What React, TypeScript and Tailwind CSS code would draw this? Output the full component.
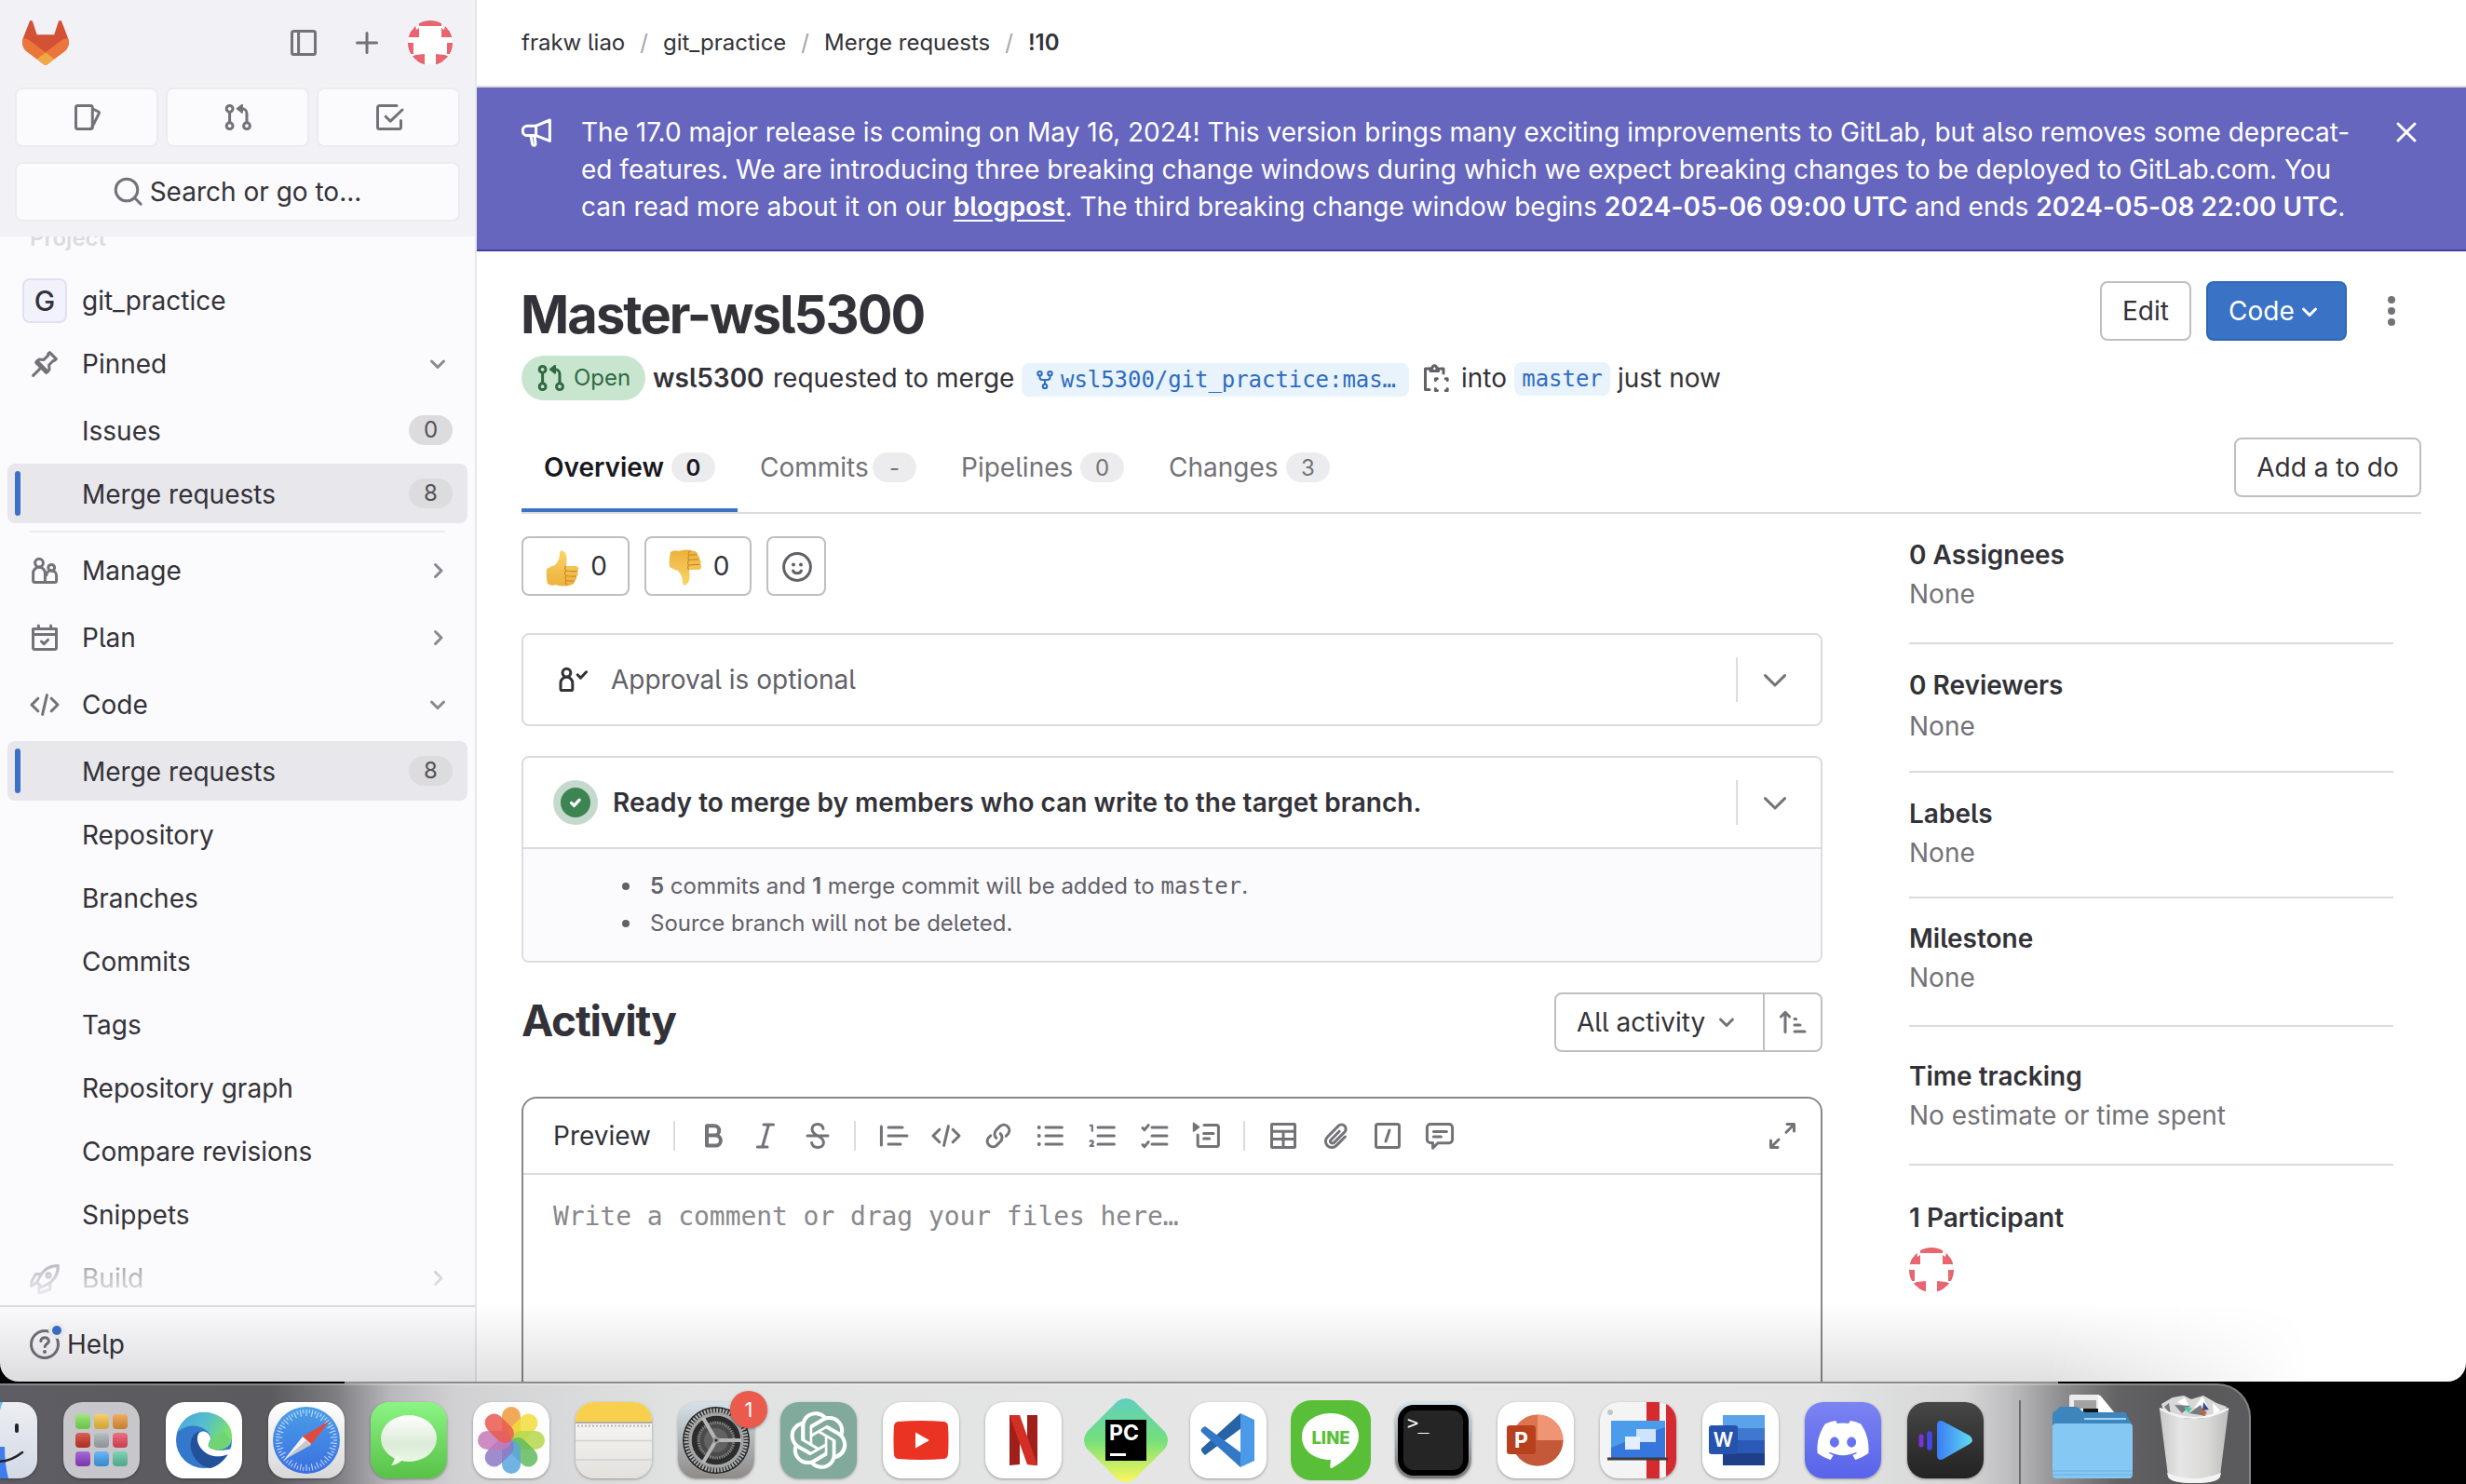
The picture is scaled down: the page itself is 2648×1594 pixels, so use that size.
import React from "react";
import { RiOpenaiFill } from "react-icons/ri";
import { FaDiscord } from "react-icons/fa";

type IconProps = { className?: string; children: React.ReactNode; w?: number };

function Icon({ className = "", children, w = 1.5 }: IconProps) {
  return (
    <svg
      viewBox="0 0 16 16"
      className={"size-8 shrink-0 " + className}
      fill="none"
      stroke="currentColor"
      strokeWidth={w}
      strokeLinecap="round"
      strokeLinejoin="round"
    >
      {children}
    </svg>
  );
}

/* ---------- icons ---------- */

const MergeIcon = ({ className }: { className?: string }) => (
  <Icon className={className}>
    <circle cx="3.3" cy="3.4" r="1.7" />
    <circle cx="3.3" cy="12.6" r="1.7" />
    <circle cx="12.5" cy="12.6" r="1.7" />
    <path d="M3.3 5.2v5.6M12.5 10.8V5.9a2.5 2.5 0 0 0-2.5-2.5H9" />
    <path d="M10 1.4v4L7.4 3.4z" fill="currentColor" strokeWidth="1" />
  </Icon>
);

const ForkIcon = ({ className }: { className?: string }) => (
  <Icon className={className}>
    <circle cx="4" cy="3" r="1.6" />
    <circle cx="12" cy="3" r="1.6" />
    <circle cx="8" cy="13" r="1.6" />
    <path d="M4 4.7V6c0 1.2.9 2 2 2h4c1.100 0 2-.8 2-2V4.700M8 8v3.300" />
  </Icon>
);

const ChevronDown = ({ className }: { className?: string }) => (
  <Icon className={className}>
    <path d="M4.750 6.500L8 9.750l3.250-3.250" />
  </Icon>
);

const ChevronRight = ({ className }: { className?: string }) => (
  <Icon className={className}>
    <path d="M6.750 4.750L10 8l-3.250 3.250" />
  </Icon>
);

const CodeIcon = ({ className }: { className?: string }) => (
  <Icon className={className}>
    <path d="M4.400 4.600L1 8l3.400 3.400M11.600 4.600L15 8l-3.400 3.400M9.200 2.800L6.800 13.200" />
  </Icon>
);

const PinIcon = () => (
  <Icon>
    <path d="M10.700 1.800l3.500 3.500-1 .9-.5-.1-2.400 2.400.2 2.500-1.700 1.700-5.500-5.500L5 5.500l2.500.2 2.400-2.400-.1-.6z" />
    <path d="M5.700 10.300L1.800 14.200M3.900 6.300l5.800 5.800" />
  </Icon>
);

const PeopleIcon = () => (
  <Icon>
    <circle cx="5" cy="3.800" r="2.200" />
    <circle cx="11.600" cy="6.400" r="1.700" />
    <path d="M1.800 13.200V9.300a3.200 3.200 0 0 1 6.400 0v4.900H2.800a1 1 0 0 1-1-1zM8.300 14.200h5a1 1 0 0 0 1-1v-2.300a2.700 2.700 0 0 0-5.400-.5" />
  </Icon>
);

const PlanIcon = () => (
  <Icon>
    <path d="M1.750 3.200h12.500v10.300a.7.700 0 0 1-.7.700H2.450a.7.700 0 0 1-.7-.7zM1.750 6.300h12.500M4.700 1.500v1.500M11.300 1.500v1.500M6.200 10l1.400 1.300 2.200-2.200" />
  </Icon>
);

const RocketIcon = () => (
  <Icon className="translate-y-px">
    <path d="M15.200.8c-4.600 0-7.800 2-9.700 5.700l-1.700 3.200 2.600 2.600 3.200-1.700c3.700-2 5.600-5.200 5.600-9.800z" />
    <path d="M6.200 5.300H3.100L.9 9.500l-.1 2.200 3-2M10.900 10.200v3.200l-4.300 1.700-1.800.1.300-3" />
    <circle cx="10" cy="6" r="1.100" />
  </Icon>
);

const Tanuki = () => (
  <svg viewBox="0 0 25 24" className="h-12 w-[50px]">
    <path
      d="m24.507 9.500-.034-.090L21.082.562a.896.896 0 0 0-1.694.091l-2.290 7.010H7.825L5.535.653a.898.898 0 0 0-1.694-.090L.451 9.411.416 9.500a6.297 6.297 0 0 0 2.090 7.278l.012.010.030.022 5.160 3.867 2.560 1.935 1.554 1.176a1.051 1.051 0 0 0 1.268 0l1.555-1.176 2.560-1.935 5.197-3.890.014-.010A6.297 6.297 0 0 0 24.507 9.500Z"
      fill="#d35134"
    />
    <path
      d="m24.507 9.500-.034-.090a11.440 11.440 0 0 0-4.560 2.051l-7.447 5.632 4.742 3.584 5.197-3.890.014-.010A6.297 6.297 0 0 0 24.507 9.500Z"
      fill="#eb763b"
    />
    <path
      d="m7.707 20.677 2.560 1.935 1.555 1.176a1.051 1.051 0 0 0 1.268 0l1.555-1.176 2.560-1.935-4.743-3.584-4.755 3.584Z"
      fill="#f0a842"
    />
    <path
      d="M5.010 11.461a11.430 11.430 0 0 0-4.560-2.050L.416 9.500a6.297 6.297 0 0 0 2.090 7.278l.012.010.030.022 5.160 3.867 4.745-3.584-7.444-5.632Z"
      fill="#eb763b"
    />
  </svg>
);

const Avatar = () => (
  <svg viewBox="0 0 48 48" className="size-12 overflow-hidden rounded-full bg-white">
    <g fill="#ea6570">
      <path d="M12 0h24v6H12zM0 24h6v12H0zM42 24h6v12h-6z" />
      <path d="M0 18h12V8l-3 2-1-5-3 5-5 3zM48 18H36V8l3 2 1-5 3 5 5 3z" />
      <path d="M18 36v12H6l4-5-6-4 4-2zM30 36v12h12l-4-5 6-4-4-2z" />
    </g>
    <circle cx="24" cy="24" r="23.500" fill="none" stroke="#000" strokeOpacity=".07" />
  </svg>
);

/* ---------- sidebar ---------- */

function NavBadge({ children }: { children: React.ReactNode }) {
  return (
    <span className="flex h-8 w-[47px] items-center justify-center rounded-full bg-[#dcdcde] text-2xl text-[#535158]">
      {children}
    </span>
  );
}

function SubItem({ label, badge, active, className = "mt-1" }: { label: string; badge?: string; active?: boolean; className?: string }) {
  return (
    <div
      className={
        "flex h-16 shrink-0 items-center rounded-lg pr-4 " + (active ? "bg-[#e8e7ec] " : "") + className
      }
    >
      <span className={"ml-2 h-12 w-1.5 rounded-full " + (active ? "bg-[#3a72c6]" : "")} />
      <span className="ml-[66px] flex-1 pt-[3px]">{label}</span>
      {badge && <NavBadge>{badge}</NavBadge>}
    </div>
  );
}

function Category({ icon, label, open, className }: { icon: React.ReactNode; label: string; open?: boolean; className: string }) {
  return (
    <div className={"flex h-16 shrink-0 items-center pl-6 pr-4 " + className}>
      <span className="text-[#737278]">{icon}</span>
      <span className="ml-6 flex-1 pt-0.5">{label}</span>
      <span className="text-[#89888d]">{open ? <ChevronDown /> : <ChevronRight />}</span>
    </div>
  );
}

function Sidebar() {
  const shortcut = "flex h-16 flex-1 items-center justify-center rounded-lg border-2 border-[#ececef] bg-[#fbfafd] pl-0.5";
  return (
    <aside className="flex w-[512px] shrink-0 flex-col border-r-2 border-[#e7e6eb] bg-[#fbfafd]">
      <div className="h-[254px] shrink-0 bg-[#f2f1f6] px-4 pt-[22px] text-[#737278]">
        <div className="flex h-12 items-center pl-2 pr-2">
          <Tanuki />
          <div className="ml-auto flex items-center">
            <Icon>
              <rect x="1.750" y="1.750" width="12.500" height="12.500" rx="1" />
              <path d="M5.300 2v12" />
            </Icon>
            <Icon className="ml-9">
              <path d="M8 2.750v10.500M2.750 8h10.500" />
            </Icon>
            <span className="ml-7">
              <Avatar />
            </span>
          </div>
        </div>
        <div className="mt-6 flex gap-2">
          <div className={shortcut}>
            <Icon>
              <rect x="1.750" y="1.750" width="8.900" height="12.500" rx="1" />
              <path d="M10.900 3.600l3 1.400q.5.300.3.800L10.300 13.600" />
            </Icon>
          </div>
          <div className={shortcut}>
            <MergeIcon />
          </div>
          <div className={shortcut}>
            <Icon>
              <path d="M12 1.750H2.750a1 1 0 0 0-1 1v10.500a1 1 0 0 0 1 1h10.500a1 1 0 0 0 1-1V9.800M6.100 7.600l2.500 2.500L15 4" />
            </Icon>
          </div>
        </div>
        <div className="mt-4 flex h-16 items-center justify-center rounded-lg border-2 border-[#ececef] bg-[#fbfafd]">
          <Icon>
            <circle cx="7" cy="7" r="5.900" />
            <path d="M11.400 11.400l3.200 3.200" />
          </Icon>
          <span className="ml-[7px] pt-0.5 text-[#333238]">Search or go to...</span>
        </div>
      </div>

      <nav className="relative flex h-[1148px] shrink-0 flex-col overflow-hidden px-2 text-[#333238]">
        <div className="-mt-4 h-[37px] shrink-0 pl-6 text-2xl leading-[36px] font-semibold text-[#dcdbdf]">Project</div>
        <div className="mt-4 flex h-16 shrink-0 items-center pl-4">
          <span className="flex size-12 items-center justify-center rounded-lg border-2 border-[#e2e0f0] bg-[#f2f2fd] text-[30px] font-medium">
            G
          </span>
          <span className="ml-4 pt-0.5">git_practice</span>
        </div>
        <Category icon={<PinIcon />} label="Pinned" open className="mt-1" />
        <SubItem label="Issues" badge="0" className="mt-[7px]" />
        <SubItem label="Merge requests" badge="8" active />
        <div className="mx-6 mt-2 h-0.5 shrink-0 bg-[#ececef]" />
        <Category icon={<PeopleIcon />} label="Manage" className="mt-[9px]" />
        <Category icon={<PlanIcon />} label="Plan" className="mt-2" />
        <Category icon={<CodeIcon />} label="Code" open className="mt-2" />
        <SubItem label="Merge requests" badge="8" active className="mt-[7px]" />
        {["Repository", "Branches", "Commits", "Tags", "Repository graph", "Compare revisions", "Snippets"].map((l) => (
          <SubItem key={l} label={l} />
        ))}
        <Category icon={<RocketIcon />} label="Build" className="mt-[5px]" />
        <div className="absolute inset-x-0 bottom-0 h-[72px] bg-gradient-to-b from-[#fbfafd]/25 to-[#fbfafd]" />
      </nav>

      <div className="flex flex-1 items-center border-t-2 border-[#dcdcde] pl-8 text-[#333238]">
        <span className="relative text-[#737278]">
          <Icon>
            <circle cx="8" cy="8" r="7.250" />
            <path d="M5.900 6.200c.2-1.200 1-1.800 2.200-1.800 1.200 0 2.100.8 2.100 1.800 0 1.500-2.100 1.600-2.100 3.100" />
            <circle cx="8" cy="12" r=".5" fill="currentColor" strokeWidth="1" />
          </Icon>
          <span className="absolute -top-1 left-6 size-2.5 rounded-full bg-[#3a72c6] ring-4 ring-[#f4f3f7]" />
        </span>
        <span className="ml-2 pt-0.5">Help</span>
      </div>
    </aside>
  );
}

/* ---------- main ---------- */

function Banner() {
  return (
    <div className="flex h-[176px] shrink-0 border-b-2 border-[#41419f] bg-[#6666be] pl-12 pt-7 text-white">
      <Icon className="mt-1">
        <path d="M15.200 1.500v11.200L7.800 9.800V4.600zM7.800 4.600H3.200a2.600 2.600 0 0 0 0 5.200h4.600M5 10l.8 4.300q.2.900 1 .8.900-.2.700-1.100L7 10" />
      </Icon>
      <div className="ml-8 w-[1949px] leading-[40px] whitespace-nowrap">
        <div>
          The 17.0 major release is coming on May 16, 2024! This version brings many exciting improvements to GitLab, but
          also removes some deprecat-
        </div>
        <div>
          ed features. We are introducing three breaking change windows during which we expect breaking changes to be
          deployed to GitLab.com. You
        </div>
        <div className="tracking-[0.01px]">
          can read more about it on our <b className="font-semibold underline underline-offset-4">blogpost</b>. The third
          breaking change window begins <b className="font-semibold">2024-05-06 09:00 UTC</b> and ends{" "}
          <b className="font-semibold">2024-05-08 22:00 UTC</b>.
        </div>
      </div>
      <Icon className="-ml-[5px] mt-1">
        <path d="M3.500 3.500l9 9M12.500 3.500l-9 9" />
      </Icon>
    </div>
  );
}

function Tab({ label, count, active, className }: { label: string; count: string; active?: boolean; className: string }) {
  return (
    <div
      className={
        "flex h-full shrink-0 items-center justify-between pl-6 " +
        (active ? "border-b-4 border-[#3a72c6] pt-1 font-semibold text-[#18171d] " : "text-[#737278] ") +
        className
      }
    >
      <span className="pt-0.5">{label}</span>
      <span className="flex h-8 w-[47px] items-center justify-center rounded-full bg-[#ececef] pt-px text-2xl">{count}</span>
    </div>
  );
}

const Hand = ({ down }: { down?: boolean }) => (
  <svg viewBox="0 0 36 40" className={"h-10 w-9 " + (down ? "-scale-y-100" : "translate-y-0.5")}>
    <defs>
      <linearGradient id="skin" x1="0" y1="0" x2="0" y2="1">
        <stop offset="0" stopColor="#f9d568" />
        <stop offset="1" stopColor="#eeb03c" />
      </linearGradient>
    </defs>
    <path
      d="M1 20q5-3 9-4 5-5 5-13 1-4 4-2 5 3 3 16l11 0q4 2 1 6 2 3-1 5 1 3-2 5 0 3-3 4-10 3-17 0-5 2-9-1-2-8-1-16z"
      fill="url(#skin)"
    />
    <path
      d="M22 17q-3 2 0 5 5 1 12 .5M22 22q-3 2 0 5.500 5 1 11 .5M22 27.500q-2 2 0 5 4 1 9 .5M22 32.500q-2 2 1 5"
      fill="none"
      stroke="#c98a2a"
      strokeWidth="1.200"
    />
  </svg>
);

function CardChevron() {
  return (
    <div className="ml-auto flex h-12 w-[91px] items-center border-l-2 border-[#dcdcde] pl-6 text-[#737278]">
      <Icon>
        <path d="M2.750 5.800L8 11l5.250-5.200" />
      </Icon>
    </div>
  );
}

const Rule = ({ className }: { className: string }) => <div className={"h-8 w-0.5 bg-[#dcdcde] " + className} />;

function Toolbar() {
  return (
    <div className="flex h-[82px] items-center border-b-2 border-[#dcdcde] pl-8 text-[#737278]">
      <span className="w-[129px] pt-0.5 text-[#333238]">Preview</span>
      <Rule className="" />
      <div className="ml-[25px] flex gap-6">
        <Icon w={2}>
          <path d="M4.500 2.600h4a2.600 2.600 0 0 1 0 5.200h-4zM4.500 7.800h4.700a2.700 2.700 0 0 1 0 5.500H4.500z" />
        </Icon>
        <Icon>
          <path d="M7 2h5.300M3.700 14H9M9.700 2L6.300 14" />
        </Icon>
        <Icon>
          <path d="M2.500 8h11M11 4.200C10.700 2.600 9.600 1.750 8 1.750 6.300 1.750 5 2.800 5 4.400 5 6.500 6.800 7.300 8 8s3.200 1.500 3.200 3.600c0 1.600-1.400 2.650-3.100 2.650-1.800 0-3-.9-3.300-2.500" />
        </Icon>
      </div>
      <Rule className="ml-[23px]" />
      <div className="ml-[25px] flex gap-6">
        <Icon>
          <path d="M1.200 3v10M5 3.500h7.500M5 8h10M5 12.500h6.500" />
        </Icon>
        <CodeIcon />
        <Icon>
          <path d="M6.900 9.200a3 3 0 0 1-.1-4.200l2.300-2.300a3 3 0 0 1 4.200 4.200l-1.200 1.200M9.100 6.800a3 3 0 0 1 .1 4.200l-2.300 2.300a3 3 0 0 1-4.200-4.200l1.200-1.200" />
        </Icon>
        <Icon>
          <path d="M5.500 3.500h8.700M5.500 8h8.700M5.500 12.500h8.700" />
          <path d="M1.800 3.500h.1M1.800 8h.1M1.800 12.500h.1" strokeWidth="1.900" />
        </Icon>
        <Icon>
          <path d="M5.500 3.500h8.700M5.500 8h8.700M5.500 12.500h8.700" />
          <path d="M1.400 2.400h1v3M1.300 10.800q1.700-.5 1.600.7-.1.800-1.600 2h1.700" strokeWidth="1.100" />
        </Icon>
        <Icon>
          <path d="M6.500 3.500h8M6.500 8h8M6.500 12.500h8M1.500 3.800l1 1L4.600 2.300M1.500 12.800l1 1 2.100-2.500" />
        </Icon>
        <Icon>
          <path d="M.8 1.200L3.800 3.300.8 5.500z" fill="currentColor" strokeWidth=".8" />
          <path d="M6.500 2.300h6.700a1 1 0 0 1 1 1v9.400a1 1 0 0 1-1 1H4.100a1 1 0 0 1-1-1V7.500M6.300 6.700h5.200M6.300 9.500h3" />
        </Icon>
      </div>
      <Rule className="ml-[23px]" />
      <div className="ml-[25px] flex gap-6">
        <Icon>
          <rect x="1.750" y="1.750" width="12.500" height="12.500" rx=".3" />
          <path d="M1.750 5.600h12.500M1.750 9.800h12.500M8 5.600v8.600" />
        </Icon>
        <Icon>
          <path d="M13.200 8.500l-4.800 4.800a3.300 3.300 0 0 1-4.700-4.700l5.900-5.900a2.300 2.300 0 0 1 3.300 3.300l-5.700 5.700a1.100 1.100 0 0 1-1.600-1.600l4.500-4.500" />
        </Icon>
        <Icon>
          <rect x="1.750" y="1.750" width="12.500" height="12.500" rx="1" />
          <path d="M9 5L7 11" />
        </Icon>
        <Icon>
          <path d="M3 1.750h10a1.800 1.800 0 0 1 1.800 1.800v6.500a1.800 1.800 0 0 1-1.800 1.800H7L4.300 14.600v-2.800H3a1.800 1.800 0 0 1-1.800-1.800V3.550A1.800 1.800 0 0 1 3 1.750zM4.700 5.800h7M4.700 8.500h4" />
        </Icon>
      </div>
      <Icon className="ml-auto mr-[25px]">
        <path d="M10 6.100l4-4M10.500 1.750h3.750V5.500M6 10l-4 4M1.750 10.500v3.750H5.500" />
      </Icon>
    </div>
  );
}

function MetaBlock({ title, value, className, gap }: { title: string; value: string; className: string; gap: string }) {
  return (
    <div className={"border-b-2 border-[#dcdcde] leading-[40px] " + className}>
      <div className="font-semibold text-[#333238]">{title}</div>
      <div className={"text-[#737278] " + gap}>{value}</div>
    </div>
  );
}

function Main() {
  const btn = "flex h-16 items-center justify-center rounded-lg border-2 border-[#bfbfc3] bg-white pt-0.5 text-[#333238]";
  const chip = "rounded-lg bg-[#e9f3fc] font-['DejaVu_Sans_Mono',monospace] text-2xl tracking-[-0.05px] text-[#2f6cc0]";
  const sep = <span className="mx-4 text-[#a4a3a8]">/</span>;
  return (
    <main className="flex min-w-0 flex-1 flex-col bg-white text-[#333238]">
      <div className="flex h-[94px] shrink-0 items-center border-b-2 border-[#dcdcde] pl-12 text-2xl">
        frakw liao{sep}git_practice{sep}Merge requests{sep}
        <span className="font-semibold">!10</span>
      </div>
      <Banner />
      <div className="flex min-h-0 flex-1 flex-col pl-12 pt-8">
        <div className="flex h-16 shrink-0 items-center">
          <h1 className="-ml-px pt-2 text-[56px] leading-none font-[650] tracking-[-1.9px]">Master-wsl5300</h1>
          <div className={"ml-auto w-[98px] " + btn}>Edit</div>
          <div className="ml-4 flex h-16 w-[151px] items-center rounded-lg border-2 border-[#2f68b4] bg-[#3a72c6] pl-[22px] pt-0.5 text-white">
            Code
            <ChevronDown />
          </div>
          <div className="mr-[76px] ml-11 flex flex-col gap-1">
            <i className="size-2 rounded-full bg-[#737278]" />
            <i className="size-2 rounded-full bg-[#737278]" />
            <i className="size-2 rounded-full bg-[#737278]" />
          </div>
        </div>

        <div className="mt-4 flex h-12 shrink-0 items-center whitespace-nowrap">
          <span className="flex h-12 w-[133px] shrink-0 items-center rounded-full bg-[#c8e5cf] pl-4 text-2xl text-[#2f6a40]">
            <MergeIcon />
            <span className="ml-2">Open</span>
          </span>
          <b className="ml-2 w-[129px] shrink-0 pt-px font-semibold">wsl5300</b>
          <span className="w-[267px] shrink-0 pt-px">requested to merge</span>
          <span className={"mt-1 flex h-9 w-[416px] shrink-0 items-center pl-3.5 " + chip}>
            <ForkIcon className="mr-1.5 !size-[22px]" />
            wsl5300/git_practice:mas…
          </span>
          <Icon className="ml-3 text-[#626168]">
            <path d="M5 3H2.750v11.250H5M11 3h1.500v2.500" />
            <path d="M5.500 4.200V2.900h.9a1.250 1.500 0 0 1 2.500 0h.9v1.300z" />
            <path d="M8.200 9.200V8.400h1M13.600 8.400h1v.8M14.600 13.800v.9h-1M9.200 14.700h-1v-.9" />
          </Icon>
          <span className="ml-3 w-[57px] shrink-0 pt-px">into</span>
          <span className={"mt-0.5 flex h-9 w-[103px] shrink-0 items-center justify-center " + chip}>master</span>
          <span className="ml-2 pt-px">just now</span>
        </div>

        <div className="mr-12 mt-6 flex h-[98px] shrink-0 items-center border-b-2 border-[#dcdcde]">
          <Tab label="Overview" count="0" active className="w-[232px] pr-6" />
          <Tab label="Commits" count="-" className="w-[216px] pr-6" />
          <Tab label="Pipelines" count="0" className="w-[223px] pr-6" />
          <Tab label="Changes" count="3" className="w-[221px] pr-6" />
          <div className={"ml-auto w-[201px] " + btn}>Add a to do</div>
        </div>

        <div className="flex min-h-0 flex-1">
          <section className="flex w-[1397px] shrink-0 flex-col">
            <div className="mt-6 flex h-16 shrink-0">
              <div className={"w-[116px] gap-3 pl-0.5 " + btn}>
                <Hand />0
              </div>
              <div className={"ml-4 w-[115px] gap-3 pl-0.5 " + btn}>
                <Hand down />0
              </div>
              <div className={"ml-4 w-16 pl-px " + btn}>
                <Icon className="text-[#626168]">
                  <circle cx="8" cy="8" r="7.200" />
                  <path d="M5.800 10a2.300 2 0 0 0 4.400 0" />
                  <circle cx="6" cy="6.800" r=".5" fill="currentColor" strokeWidth="1" />
                  <circle cx="10" cy="6.800" r=".5" fill="currentColor" strokeWidth="1" />
                </Icon>
              </div>
            </div>

            <div className="mt-10 flex h-[100px] shrink-0 items-center rounded-lg border-2 border-[#dcdcde] pl-[37px] text-[#626168]">
              <Icon className="text-[#333238]">
                <circle cx="4.700" cy="4.300" r="2.200" />
                <path d="M1.500 12.500V9.800a3.200 3.200 0 0 1 6.400 0v3.200a.8.800 0 0 1-.8.800H2.300a.8.800 0 0 1-.8-.8zM10.600 5.400l1.600 1.700L15.300 3.900" />
              </Icon>
              <span className="ml-[25px] pt-0.5">Approval is optional</span>
              <CardChevron />
            </div>

            <div className="mt-8 h-[222px] shrink-0 overflow-hidden rounded-lg border-2 border-[#dcdcde]">
              <div className="flex h-[98px] items-center border-b-2 border-[#dcdcde] pl-8">
                <span className="flex size-12 items-center justify-center rounded-full bg-[#c5dacc]">
                  <span className="flex size-8 items-center justify-center rounded-full bg-[#3c8451] text-white">
                    <Icon w={2.200} className="!size-6">
                      <path d="M5 8.300l2 2 3.800-4.200" />
                    </Icon>
                  </span>
                </span>
                <b className="ml-4 pt-0.5 font-semibold tracking-[0.02px]">
                  Ready to merge by members who can write to the target branch.
                </b>
                <CardChevron />
              </div>
              <ul className="h-[120px] list-none bg-[#fbfafd] pt-5 text-2xl leading-[40px] text-[#626168]">
                <li className="flex items-center pl-[106px]">
                  <i className="mr-[22px] size-2 rounded-full bg-[#626168]" />
                  <span>
                    <b className="font-semibold">5</b> commits and <b className="font-semibold">1</b> merge commit will be
                    added to <span className="font-['DejaVu_Sans_Mono',monospace]">master</span>.
                  </span>
                </li>
                <li className="flex items-center pl-[106px]">
                  <i className="mr-[22px] size-2 rounded-full bg-[#626168]" />
                  Source branch will not be deleted.
                </li>
              </ul>
            </div>

            <div className="mt-8 flex h-16 shrink-0 items-center">
              <h2 className="pb-1 text-[46px] leading-none font-[650] tracking-[-1.2px]">Activity</h2>
              <div className="ml-auto flex h-16 w-[288px] rounded-lg border-2 border-[#bfbfc3]">
                <div className="flex w-[224px] items-center border-r-2 border-[#bfbfc3] pl-[22px]">
                  <span className="w-[145px] pt-0.5">All activity</span>
                  <ChevronDown className="text-[#737278]" />
                </div>
                <div className="flex flex-1 items-center justify-center text-[#737278]">
                  <Icon>
                    <path d="M4 13.200V2.800M1.700 5L4 2.700 6.300 5M9 6.200h.8M9 9.500h3M9 13h5.500" />
                  </Icon>
                </div>
              </div>
            </div>

            <div className="mt-12 h-[400px] shrink-0 rounded-t-2xl border-2 border-[#89888d]">
              <Toolbar />
              <div className="pt-[25px] pl-8 font-['DejaVu_Sans_Mono',monospace] leading-[40px] tracking-[-0.07px] text-[#89888d]">
                Write a comment or drag your files here…
              </div>
            </div>
          </section>

          <section className="ml-[93px] flex w-[520px] flex-col pt-6">
            <MetaBlock title="0 Assignees" value="None" gap="mt-0.5" className="pb-8" />
            <MetaBlock title="0 Reviewers" value="None" gap="mt-1" className="mt-6 pb-7" />
            <MetaBlock title="Labels" value="None" gap="mt-0.5" className="mt-6 pb-[27px]" />
            <MetaBlock title="Milestone" value="None" gap="mt-0.5" className="mt-[23px] pb-[31px]" />
            <MetaBlock title="Time tracking" value="No estimate or time spent" gap="mt-0.5" className="mt-[33px] pb-8" />
            <div className="mt-9 mb-3 leading-[40px] font-semibold">1 Participant</div>
            <Avatar />
          </section>
        </div>
      </div>
    </main>
  );
}

/* ---------- dock ---------- */

function Tile({ className = "", children }: { className?: string; children?: React.ReactNode }) {
  return (
    <div
      className={
        "relative flex size-[82px] shrink-0 items-center justify-center overflow-hidden rounded-[20px] shadow-[0_1px_3px_rgba(0,0,0,0.35)] " +
        className
      }
    >
      {children}
    </div>
  );
}

const Art = ({ children, className = "size-full" }: { children: React.ReactNode; className?: string }) => (
  <svg viewBox="0 0 82 82" className={"shrink-0 " + className}>
    {children}
  </svg>
);

const launchpad = [
  ["#86e55e", "#f7c544", "#ed9a3c"],
  ["#d13a2c", "#a9b0b5", "#ec4f62"],
  ["#9445cf", "#46a6f5", "#62c9a5"],
];

const petals = ["#ef9a3c", "#f1dc3a", "#b5d84c", "#63bb5c", "#59a6e0", "#8d78c3", "#c678b8", "#ea5a50"];

function SafariTicks() {
  return (
    <g stroke="#fff" strokeOpacity=".75" strokeWidth="1">
      {Array.from({ length: 60 }, (_, i) => (
        <path key={i} d={i % 2 ? "M41 8v4" : "M41 8v7"} transform={`rotate(${i * 6} 41 41)`} />
      ))}
    </g>
  );
}

function Dock() {
  return (
    <footer className="relative flex h-[110px] shrink-0 items-start bg-black">
      <div className="absolute top-0 left-[370px] h-0.5 w-[1840px] bg-[#8c8c8b]" />
      <div className="mt-0.5 flex h-[130px] w-[2417px] rounded-tr-[36px] border-t-2 border-r-2 border-white/25 bg-[linear-gradient(90deg,#5e5d63_0px,#5b5a5f_290px,#7c7c81_360px,#b9b9bd_420px,#d1d1d3_490px,#e1e3e2_740px,#e6e7e6_1500px,#e3e4e3_1950px,#d6d6d7_2110px,#bcbcbe_2160px,#8d8d8f_2215px,#626265_2275px,#59595b_2340px,#5b5b5d_2417px)] bg-origin-border pt-[18px]">
        <Tile className="-ml-[42px] bg-gradient-to-b from-[#eceef2] to-[#d3dae6]">
          <Art>
            <path d="M0 0h45q-3 7-5 18H0z" fill="#5cc3f2" />
            <path d="M0 48h47q0 18 4 34H0z" fill="#3f7cee" />
            <path d="M60 25v6" stroke="#222" strokeWidth="4" strokeLinecap="round" />
            <path d="M16 55q26 18 50-1" fill="none" stroke="#222" strokeWidth="2.500" strokeLinecap="round" />
          </Art>
        </Tile>

        <div className="ml-7 flex gap-7">
          <Tile className="bg-[#c6c6cb]">
            <div className="grid grid-cols-3 gap-1">
              {launchpad.flat().map((c) => (
                <i key={c} className="size-4 rounded-[4px] bg-gradient-to-b from-white/20 to-black/15" style={{ backgroundColor: c }} />
              ))}
            </div>
          </Tile>
          <Tile className="bg-white">
            <Art>
              <defs>
                <linearGradient id="edgeTop" x1="0" y1="0" x2="1" y2=".4">
                  <stop offset="0" stopColor="#45a5e4" />
                  <stop offset=".55" stopColor="#55c0c8" />
                  <stop offset="1" stopColor="#7ce06c" />
                </linearGradient>
              </defs>
              <circle cx="41" cy="41" r="30" fill="#3478cc" />
              <path d="M12 33C17 18 28 11 41 11c17 0 30 12 30 26 0 9-6 14-14 14-8 0-12-2-11-5 4-4 3-12-3-16-9-7-22-6-31 3z" fill="url(#edgeTop)" />
              <path d="M36 31c-9 4-10 12-9 19 2 11 11 20 21 21 8-2 14-8 18-15-9 4-20 3-26-4-6-6-7-14-4-21z" fill="#22519a" />
              <path d="M36 33c5-4 12 0 12 7-1 3-3 5-2 8 3 4 14 5 26 2l2 4-7 2c-9 4-20 3-27-4-6-6-8-14-4-19z" fill="#fff" />
              <path d="M48 40c0 3-3 5-2 8 3 4 14 5 20 0l4-8-8-8z" fill="#70d474" />
            </Art>
          </Tile>
          <Tile className="bg-gradient-to-b from-white to-[#d8d8d8]">
            <Art>
              <defs>
                <linearGradient id="sea" x1="0" y1="0" x2="0" y2="1">
                  <stop offset="0" stopColor="#4a9fe8" />
                  <stop offset="1" stopColor="#3a6fe0" />
                </linearGradient>
              </defs>
              <circle cx="41" cy="41" r="36" fill="url(#sea)" />
              <SafariTicks />
              <path d="M66 20L37 37l9 9z" fill="#e04a3f" />
              <path d="M17 62l20-25 9 8z" fill="#f3f3f5" />
              <path d="M17 62l24-21 5 5z" fill="#c6c8ce" />
            </Art>
          </Tile>
          <Tile className="bg-gradient-to-b from-[#8bf584] to-[#58c146]">
            <Art>
              <defs>
                <linearGradient id="bubble" x1="0" y1="0" x2="0" y2="1">
                  <stop offset="0" stopColor="#fff" />
                  <stop offset=".6" stopColor="#dcebd8" />
                  <stop offset="1" stopColor="#e8f8e4" />
                </linearGradient>
              </defs>
              <ellipse cx="41" cy="39" rx="30" ry="25" fill="url(#bubble)" />
              <path d="M26 57q0 6-4 11 8-1 13-7z" fill="#eefaea" />
            </Art>
          </Tile>
          <Tile className="bg-[#fdfdfd]">
            <Art>
              {petals.map((c, i) => (
                <rect key={c} x="31" y="5" width="20" height="36" rx="10" fill={c} fillOpacity=".85" transform={`rotate(${i * 45} 41 41)`} />
              ))}
            </Art>
          </Tile>
          <Tile className="bg-gradient-to-b from-[#fbfbfa] to-[#e2e1dc]">
            <Art>
              <path d="M0 0h82v21H0z" fill="#f8d04e" />
              <path d="M0 22h82" stroke="#9a958a" strokeWidth="1.500" />
              <path d="M2 25.500h80" stroke="#b5b3ad" strokeWidth="2" strokeDasharray="2 2" />
              <path d="M0 41.500h82M0 62h82" stroke="#d2d1d0" strokeWidth="1.500" />
            </Art>
          </Tile>
          <div className="relative">
            <Tile className="bg-gradient-to-b from-[#d5e1ea] to-[#8e8b88]">
              <Art>
                <circle cx="41" cy="41" r="36" fill="#242424" />
                <circle cx="41" cy="41" r="32" fill="#2c2c2c" stroke="#aeb0b1" strokeWidth="5" strokeDasharray="2 1.350" />
                <circle cx="41" cy="41" r="28" fill="#2c2c2c" stroke="#a3a5a6" strokeWidth="3.500" />
                <circle cx="41" cy="41" r="19" fill="#4a4a4a" stroke="#858585" strokeWidth="3" strokeDasharray="1.500 1" />
                <circle cx="41" cy="41" r="13" fill="#626262" />
                <path d="M41 41h27M41 41L27 17M41 41L27 65" stroke="#b4b6b7" strokeWidth="4" />
                <circle cx="41" cy="41" r="3.500" fill="#999" />
                <circle cx="41" cy="41" r="1.500" fill="#222" />
              </Art>
            </Tile>
            <span className="absolute -top-3 left-[56px] flex size-10 items-center justify-center rounded-full bg-[#ea5a4d] text-[22px] text-white shadow-[0_1px_3px_rgba(0,0,0,0.4)]">
              1
            </span>
          </div>
          <Tile className="bg-[#81a99c]">
            <RiOpenaiFill className="size-[74px] shrink-0 text-white" />
          </Tile>
          <Tile className="bg-white">
            <Art>
              <path d="M16 21q25-2 50 0 4 1 4 5 1 15 0 30 0 4-4 5-25 2-50 0-4-1-4-5-1-15 0-30 0-4 4-5z" fill="#ea3323" />
              <path d="M35 32.500v17L50 41z" fill="#fff" />
            </Art>
          </Tile>
          <Tile className="bg-white">
            <Art>
              <path d="M26 14h11v53l-11 1zM45 14h11v54l-11-1z" fill="#9f201b" />
              <path d="M26 14h11l19 54-11-1z" fill="#d22f26" />
            </Art>
          </Tile>
          <div className="-mx-1 -mt-1 size-[90px]">
            <svg viewBox="0 0 90 90" className="size-full">
              <defs>
                <linearGradient id="pc" x1="0" y1="0" x2="0" y2="1">
                  <stop offset="0" stopColor="#5fcfc0" />
                  <stop offset=".5" stopColor="#74e07b" />
                  <stop offset=".8" stopColor="#c8ee66" />
                  <stop offset="1" stopColor="#fcf65e" />
                </linearGradient>
              </defs>
              <path d="M36 3q9-6 18 0l33 33q6 9 0 18L54 87q-9 6-18 0L3 54q-6-9 0-18z" fill="url(#pc)" />
              <path d="M23 23h44v44H23z" fill="#000" />
              <path d="M28 59h17v3H28z" fill="#fff" />
              <text x="27" y="45" fontFamily="Inter, sans-serif" fontWeight="700" fontSize="23" fill="#fff">
                PC
              </text>
            </svg>
          </div>
          <Tile className="bg-white">
            <Art>
              <path d="M54 12L12 50q-1 3 4 7l39-29z" fill="#2863a6" />
              <path d="M16 26q-6 3-4 6l42 38V54z" fill="#3278c6" />
              <path d="M54 12l15 7v44l-15 7z" fill="#4b9ae9" />
            </Art>
          </Tile>
          <Tile className="rounded-[14px] bg-[#5abf38] ring-2 ring-[#5abf38]">
            <Art>
              <path d="M41 12c18 0 30 11 30 25 0 12-11 24-29 34-2 0-2-1-1-9-18 0-31-10-31-25 0-14 13-25 31-25z" fill="#fff" />
              <text x="41" y="45" textAnchor="middle" fontFamily="Inter, sans-serif" fontWeight="800" fontSize="18.500" fill="#5abf38">
                LINE
              </text>
            </Art>
          </Tile>
          <Tile className="bg-gradient-to-b from-[#cfe3ec] to-[#777]">
            <div className="size-[76px] rounded-[17px] bg-black p-1.5">
              <div className="size-full rounded-[11px] bg-[#252525] pt-px pl-1 font-['DejaVu_Sans_Mono',monospace] text-[20px] leading-6 tracking-tight text-white">
                &gt;_
              </div>
            </div>
          </Tile>
          <Tile className="bg-white">
            <Art>
              <circle cx="43" cy="41" r="27.500" fill="#dd7350" />
              <path d="M43 13.500A27.500 27.500 0 0 1 70.500 41H43z" fill="#f09574" />
              <path d="M15.500 41h55a27.500 27.500 0 0 1-55 0z" fill="#c4593a" />
              <rect x="10" y="25" width="31" height="31" rx="3" fill="#b7411f" />
              <text x="25.500" y="49" textAnchor="middle" fontFamily="Inter, sans-serif" fontWeight="700" fontSize="23" fill="#fff">
                P
              </text>
            </Art>
          </Tile>
          <Tile className="bg-[#f4f4f5]">
            <Art>
              <path d="M50 0h14v82H50zM71 0h11v82H71z" fill="#d32b30" />
              <path d="M12 20h56q2 0 2 2v38H12z" fill="#3577dc" />
              <path d="M12 20h58v7q-30 10-58 22z" fill="#4b9ceb" />
              <path d="M8 59.500h65v3H8z" fill="#3c3d42" />
              <path d="M39 29h21v14H39z" fill="#cfe3fa" />
              <path d="M27 37h16v14H27z" fill="#e4effc" />
              <circle cx="11" cy="11" r="3" fill="#c5c5c5" />
            </Art>
          </Tile>
          <Tile className="bg-white">
            <Art>
              <path d="M22 14h45v14H22z" fill="#5aa3e8" />
              <path d="M22 28h45v13H22z" fill="#3f78cf" />
              <path d="M22 41h45v14H22z" fill="#2b59b8" />
              <path d="M22 55h45v13H22z" fill="#1f3f88" />
              <rect x="7" y="25" width="31" height="31" rx="3" fill="#2553ae" />
              <text x="22.500" y="48" textAnchor="middle" fontFamily="Inter, sans-serif" fontWeight="600" fontSize="21" fill="#fff">
                W
              </text>
            </Art>
          </Tile>
          <Tile className="bg-gradient-to-b from-[#7b84f2] to-[#5863ea]">
            <FaDiscord className="size-[60px] text-white" />
          </Tile>
          <Tile className="bg-gradient-to-b from-[#474747] to-[#232323]">
            <Art>
              <defs>
                <linearGradient id="play" x1="0" y1="0" x2="1" y2="0">
                  <stop offset="0" stopColor="#3b7cf6" />
                  <stop offset="1" stopColor="#5fdcf3" />
                </linearGradient>
              </defs>
              <path d="M32 24q1-6 7-3l28 15q6 5 0 9L39 61q-6 3-7-3z" fill="url(#play)" />
              <path d="M15 37v9" stroke="#7a33e0" strokeWidth="5" strokeLinecap="round" />
              <path d="M24 34v15" stroke="#4646ee" strokeWidth="5.500" strokeLinecap="round" />
            </Art>
          </Tile>
        </div>

        <div className="ml-[38px] -mt-0.5 h-[100px] w-0.5 bg-[#6d6d70]" />
        <svg viewBox="0 0 86 94" className="-mt-2 ml-[34px] h-[94px] w-[86px]">
          <path d="M18 2q0-2 2-2h29l17 22H18z" fill="#ececec" />
          <path d="M49 0q3 1 4 3l14 17-18-2z" fill="#fff" />
          <path d="M23 6h24v9H23z" fill="#a2a2a2" />
          <path d="M33 15h16v5H33z" fill="#151515" />
          <path d="M0 22q0-4 4-5l4-4h16q4 0 6 3 2 3 6 3h40q4 0 4 4l5 8v10H0z" fill="#3d86bd" />
          <path d="M34 26h45" stroke="#9ed4f5" strokeWidth="2" />
          <path d="M0 35q0-4 4-4h78q4 0 4 4v50q0 5-4 5H4q-4 0-4-5z" fill="#85c8f4" />
          <path d="M0 82h86M0 86h86" stroke="#68aede" strokeWidth="1" />
        </svg>
        <svg viewBox="0 0 76 96" className="-mt-2 ml-[28px] h-24 w-[76px]">
          <defs>
            <linearGradient id="bin" x1="0" y1="0" x2="1" y2="0">
              <stop offset="0" stopColor="#c9c9c9" />
              <stop offset=".3" stopColor="#e6e6e6" />
              <stop offset=".7" stopColor="#d9d8d7" />
              <stop offset="1" stopColor="#bdbdbd" />
            </linearGradient>
          </defs>
          <path d="M3 10L15 3l12-2 8 4L48 1l14 8 11 4-4 12H6z" fill="#d8d8d8" />
          <path d="M20 8l8-5 6 12zM38 14l9-12 7 14zM58 9l8 8-7 5z" fill="#fff" />
          <path d="M17 11l8 9 9-8zM33 20l12-9 6 12zM6 13l7 8-2-12z" fill="#77797c" />
          <path d="M27 13l9 1-4 6z" fill="#4fc7ad" />
          <path d="M44 14l8 5-4 5z" fill="#c0693a" />
          <path d="M48 8l6 8-7 1z" fill="#394a86" />
          <path d="M1 16q37 20 74 0l-9 71q-1 8-28 8T10 87z" fill="url(#bin)" />
          <path d="M9 84q28 12 58 0l-1 4q-2 7-28 7t-28-7z" fill="#f3f3f3" />
          <path d="M1 15q37 20 74 0" fill="none" stroke="#f6f6f6" strokeWidth="2" />
        </svg>
      </div>
    </footer>
  );
}

export default function App() {
  return (
    <div className="flex h-[1594px] w-[2648px] flex-col overflow-hidden bg-black font-[Inter,'Liberation_Sans',sans-serif] text-[28px] leading-[1.4] [font-feature-settings:'cv05']">
      <div className="relative flex h-[1484px] shrink-0 overflow-hidden rounded-b-[20px]">
        <Sidebar />
        <Main />
        <div className="pointer-events-none absolute bottom-0 left-0 h-[84px] w-[2500px] bg-gradient-to-b from-black/0 to-black/12 [mask-image:linear-gradient(90deg,#000_2200px,transparent_2480px)]" />
      </div>
      <Dock />
    </div>
  );
}
